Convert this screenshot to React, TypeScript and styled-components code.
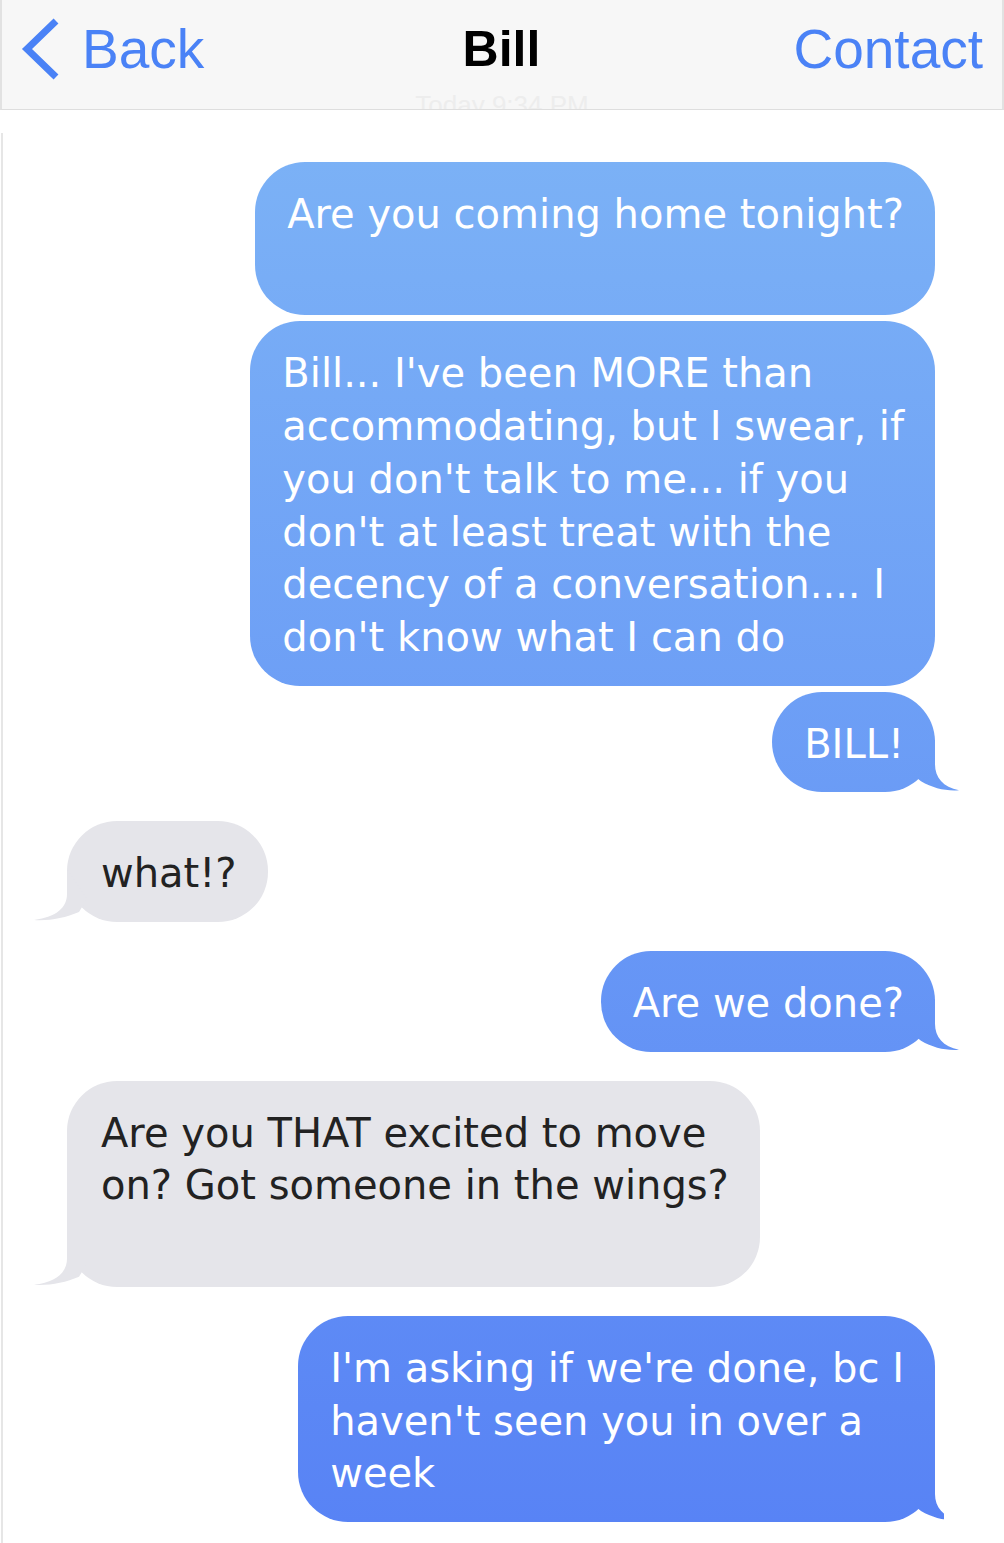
import React from "react";
import styled, { createGlobalStyle, css } from "styled-components";

type Side = "me" | "them";
type TailKind = "full" | "cut";

interface IMessage {
  from: Side;
  lines: string[];
  tail?: TailKind;
}

const messages: IMessage[] = [
  { from: "me", lines: ["Are you coming home tonight?", ""] },
  {
    from: "me",
    lines: [
      "Bill... I've been MORE than",
      "accommodating, but I swear, if",
      "you don't talk to me... if you",
      "don't at least treat with the",
      "decency of a conversation.... I",
      "don't know what I can do",
    ],
  },
  { from: "me", lines: ["BILL!"], tail: "full" },
  { from: "them", lines: ["what!?"], tail: "full" },
  { from: "me", lines: ["Are we done?"], tail: "full" },
  {
    from: "them",
    lines: ["Are you THAT excited to move", "on? Got someone in the wings?", ""],
    tail: "full",
  },
  {
    from: "me",
    lines: ["I'm asking if we're done, bc I", "haven't seen you in over a", "week"],
    tail: "cut",
  },
];

// sent bubbles shade darker further down the screen
const sentFill = css`
  background: linear-gradient(180deg, #7bb1f6 160px, #5883f5 1525px) fixed;
`;

const GlobalStyle = createGlobalStyle`
  body {
    margin: 0;
    background: #fff;
  }
`;

const App = () => {
  return (
    <>
      <GlobalStyle />
      <NavBar>
        <BackButton>
          <svg width="40" height="64" viewBox="0 0 40 64">
            <polyline
              points="36,4 7,32 36,60"
              fill="none"
              stroke="#4a82f6"
              strokeWidth="7"
            />
          </svg>
          <span>Back</span>
        </BackButton>
        <Title>Bill</Title>
        <NavLink>Contact</NavLink>
        <Stamp>Today 9:34 PM</Stamp>
      </NavBar>
      <Thread>
        {messages.map((msg, index) => {
          const grouped = index > 0 && messages[index - 1].from === msg.from;
          return (
            <Bubble key={index} $from={msg.from} $grouped={grouped}>
              {msg.lines.map((line, i) => (
                <Line key={i}>{line}</Line>
              ))}
              {msg.tail && <Tail $from={msg.from} $kind={msg.tail} />}
            </Bubble>
          );
        })}
      </Thread>
    </>
  );
};

const NavBar = styled.header`
  position: relative;
  overflow: hidden;
  box-sizing: border-box;
  height: 110px;
  display: grid;
  grid-template-columns: 1fr auto 1fr;
  align-items: center;
  padding: 0 19px 12px 18px;
  background: #f7f7f7;
  border-left: 2px solid #e2e2e2;
  border-right: 2px solid #e2e2e2;
  border-bottom: 1px solid #dedede;
  font-family: "Liberation Sans", Arial, sans-serif;
`;

const BackButton = styled.div`
  display: flex;
  align-items: center;
  gap: 22px;
  color: #4a82f6;
  font-size: 55px;
  svg {
    display: block;
  }
`;

const Title = styled.div`
  color: #000;
  font-size: 50px;
  font-weight: bold;
`;

const NavLink = styled.div`
  justify-self: end;
  color: #4a82f6;
  font-size: 55px;
`;

const Stamp = styled.div`
  position: absolute;
  left: 0;
  right: 0;
  bottom: -12px;
  text-align: center;
  color: #ededed;
  font-size: 26px;
`;

const Thread = styled.main`
  display: flex;
  flex-direction: column;
  margin-top: 23px;
  margin-left: 1px;
  padding: 29px 69px 21px 64px;
  border-left: 2px solid #e6e6e6;
`;

const Bubble = styled.div<{ $from: Side; $grouped: boolean }>`
  position: relative;
  width: max-content;
  margin-top: ${(props) => (props.$grouped ? "6px" : "29px")};
  padding: 26px 31px 22px 32px;
  border-radius: 50px;
  font-family: "DejaVu Sans", Verdana, sans-serif;
  font-size: 40px;
  line-height: 52.7px;
  white-space: pre;
  &:first-child {
    margin-top: 0;
  }
  ${(props) =>
    props.$from === "me"
      ? css`
          align-self: flex-end;
          color: #fff;
          ${sentFill}
        `
      : css`
          align-self: flex-start;
          padding-left: 34px;
          color: #222;
          background: #e5e5ea;
        `}
`;

const Line = styled.div`
  min-height: 52.7px;
`;

const Tail = styled.span<{ $from: Side; $kind: TailKind }>`
  position: absolute;
  bottom: -3px;
  width: 60px;
  height: 56px;
  ${(props) =>
    props.$from === "me"
      ? css`
          right: -26px;
          ${sentFill}
          clip-path: path("M34,0 L34,25 C34,38 42,48 58,51 C45,52 32,49 20,42 L5,30 Z");
        `
      : css`
          left: -36px;
          background: #e5e5ea;
          clip-path: path("M36,0 L36,25 C36,38 26,48 3,51 C18,52 34,49 48,43 L56,30 Z");
        `}
  ${(props) =>
    props.$kind === "cut" &&
    css`
      right: -9px;
      width: 43px;
    `}
`;

export default App;
